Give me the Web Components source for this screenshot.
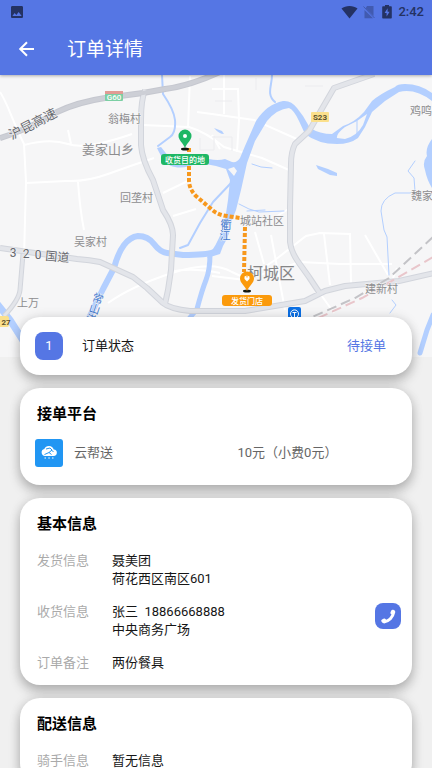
<!DOCTYPE html>
<html lang="zh-CN">
<head>
<meta charset="utf-8">
<meta name="viewport" content="width=device-width, initial-scale=1">
<title>订单详情</title>
<style>
    body {
        margin: 0;
        --primary: #5576e4;
        --page: #f0f0f0;
        font-family: Roboto, "Noto Sans CJK SC", sans-serif;
        font-size: 13px;
        line-height: 18px;
        color: #161616;
        background: var(--page);
    }
</style>
</head>
<body>
<order-page>
    <status-bar slot="header" time="2:42"></status-bar>
    <app-bar slot="header">订单详情</app-bar>
    <route-map></route-map>
    <card-list>
        <order-status step="1" state="待接单">订单状态</order-status>
        <info-card heading="接单平台">
            <delivery-platform price="10元（小费0元）">云帮送</delivery-platform>
        </info-card>
        <info-card heading="基本信息">
            <info-row label="发货信息">聂美团<br>荷花西区南区601</info-row>
            <info-row label="收货信息">张三&nbsp; 18866668888<br>中央商务广场<call-button slot="action" phone="18866668888"></call-button></info-row>
            <info-row label="订单备注">两份餐具</info-row>
        </info-card>
        <info-card heading="配送信息">
            <info-row label="骑手信息">暂无信息</info-row>
        </info-card>
    </card-list>
</order-page>

<script>
class OrderPage extends HTMLElement {
    constructor() {
        super();
        this.attachShadow({ mode: 'open' }).innerHTML = `
            <style>
                :host { display: flex; flex-direction: column; height: 100vh; }
                header {
                    background: var(--primary);
                    box-shadow: 0 1px 3px rgba(0, 0, 0, 0.3);
                    z-index: 1;
                }
                main { flex: 1; min-height: 0; overflow-y: auto; scrollbar-width: none; }
            </style>
            <header><slot name="header"></slot></header>
            <main><slot></slot></main>
        `;
    }
}

class StatusBar extends HTMLElement {
    constructor() {
        super();
        this.attachShadow({ mode: 'open' }).innerHTML = `
            <style>
                :host {
                    display: flex;
                    align-items: center;
                    height: 24px;
                    padding: 0 8px 0 9px;
                    color: #243263;
                    font-size: 13px;
                    font-weight: 500;
                }
                svg { display: block; fill: currentColor; }
                .icons { display: flex; align-items: center; gap: 4px; margin: 0 4px 0 auto; }
            </style>
            <svg width="16" height="16" viewBox="0 0 24 24"><path d="M21 19V5c0-1.100-.9-2-2-2H5c-1.100 0-2 .9-2 2v14c0 1.100.9 2 2 2h14c1.100 0 2-.9 2-2zM8.500 13.500l2.500 3 3.500-4.500 4.500 6H5l3.500-4.500z"/></svg>
            <div class="icons">
                <svg width="17" height="14" viewBox="0 0 17 14"><path d="M8.500 13.500 0.500 3.500C4.500 0 12.500 0 16.500 3.500z"/></svg>
                <svg width="14" height="14" viewBox="0 0 14 14" opacity=".4"><path d="M5 1h6.500v10L3.700 3.200zM2.500 5 11 13.200H2.500z"/><path d="M1.500 1.500 12.500 13" fill="none" stroke="currentColor"/></svg>
                <svg width="14" height="14" viewBox="0 0 14 14"><path fill-rule="evenodd" d="M5 0h4v1.300h2q.8 0 .8.8v10.600q0 .8-.8.8H3q-.8 0-.8-.8V2.100q0-.8.8-.8h2zM7.600 3.200 4.600 8h2v3.500l3-4.700h-2z"/></svg>
            </div>
            <time></time>
        `;
        this.shadowRoot.querySelector('time').textContent = this.getAttribute('time');
    }
}

class AppBar extends HTMLElement {
    constructor() {
        super();
        this.attachShadow({ mode: 'open' }).innerHTML = `
            <style>
                :host { display: flex; align-items: center; gap: 27px; height: 51px; padding: 0 14px; color: #fff; }
                button { display: flex; padding: 0; border: 0; background: none; color: inherit; cursor: pointer; }
                h1 { margin: 0; font-size: 19px; line-height: 28px; font-weight: 400; }
            </style>
            <button type="button" aria-label="返回">
                <svg width="26" height="26" viewBox="0 0 26 26" fill="none" stroke="currentColor" stroke-width="2"><path d="M20 12H6.500M13 5.200 6.200 12l6.800 6.800"/></svg>
            </button>
            <h1><slot></slot></h1>
        `;
    }
}

class RouteMap extends HTMLElement {
    constructor() {
        super();
        this.attachShadow({ mode: 'open' }).innerHTML = `
            <style>
                :host { display: block; background: #f6f6f7; }
                svg { display: block; width: 100%; }
                .water { fill: #b3cfff; }
                .stream { fill: none; stroke: #b3cfff; stroke-linecap: round; stroke-linejoin: round; }
                .lane { fill: none; stroke: #fff; stroke-width: 2; }
                .edge { fill: none; stroke: #d2d5dc; stroke-width: 6; stroke-linejoin: round; }
                .road { fill: none; stroke: #e3e5ea; stroke-width: 4; stroke-linejoin: round; }
                .place { fill: #8d8d8f; font-size: 11px; }
                .major { font-size: 13px; }
                .city { font-size: 16px; fill: #858587; }
                .name { fill: #66686e; font-size: 12px; text-anchor: middle; }
                .highway { font-size: 13px; }
                .river { fill: #3f78cf; font-size: 11px; text-anchor: middle; }
                .tag { fill: #fff; font-size: 8px; font-weight: 500; text-anchor: middle; }
                .shield { fill: #5c532f; font-weight: 700; }
                text { paint-order: stroke; stroke: #f6f6f7; stroke-width: 1px; }
                .tag { stroke: none; }
            </style>
            <svg viewBox="0 75 432 282" role="img" aria-label="配送路线">
                <!-- local streets -->
                <g class="lane">
                    <path d="M0 92C8 104 12 120 24 144L26 182 24 258M24 145Q50 138 68 144T132 134M26 183 66 181Q86 182 108 174T154 158M68 130 71 144M78 182Q80 210 84 230M142 125 189 127Q206 132 224 147L262 158 289 170M190 76 188 128M197 112 212 114 254 120 299 140M212 89 238 89 239 120 237 152M212 135 220 149M224 75V114M163 193 192 179M173 216 196 209M108 303Q132 286 172 273T232 272L245 278M170 272Q190 267 220 273"/>
                    <path d="M212 276 245 280 300 262 340 264 392 264M245 280 275 260 306 236 320 233 350 234 351 283M324 234 330 285M319 292 334 313M255 232 264 264M271 235 285 310M274 218 290 208M365 235 388 275M393 278 397 268"/>
                </g>
                <g fill="none" stroke="#ececef"><path d="M212 137h20v14M200 138v12h14V136M256 78v12M305 86h18M215 101h17"/></g>

                <!-- water -->
                <path class="water" d="M432 93Q420 84 405 84 397 84 395 87 380 94 372 101L364 112Q355 122 343 126L332 134Q320 134 310 128L303 116 297 108Q291 100 283 101 267 104 256 121L245 146 240 158Q237 163 232 162L225 159Q218 161 209 159L197 163Q185 169 175 167 165 166 157 148L161 147 169 157Q172 164 190 161L216 166 226 169 230 180 228 200 225 220Q221 238 211 252L207 258 220 254 223 246Q230 235 232 220L236 210 241 190 247 163 255 141 267 121Q277 109 289 108 294 110 299 121L305 134Q318 144 337 144 350 144 358 138L365 127 372 112 385 101 399 92Q415 88 432 101z"/>
                <path d="M337 138Q336 134 345 127L357 121 367 114 363 125Q357 136 345 139zM228 169l6-2 3 4-3 5z" fill="#f6f6f7"/>
                <path class="stream" stroke-width="1" d="M357 121v14"/>
                <path class="water" d="M432 139Q425 148 427 156 422 162 425 170 427 180 432 188zM316 165l12 4 9 4v3l-7-1-12-6zM214 128l8 3 2 3q-5 0-10-6z"/>
                <path class="stream" stroke-width="6" d="M214 252Q207 255 183 255L167 253Q160 252 154 244T138 236Q130 237 124 245T114 268L103 289 88 320"/>
                <path class="stream" stroke-width="5" d="M210 254Q210 270 206 280T197 309L188 320"/>
                <path class="stream" stroke-width="5" d="M433 315 427 330 420 353"/>
                <path class="stream" stroke-width="7" d="M-2 305 10 320 24 342"/>
                <path class="stream" stroke-width="2" d="M231 183 213 202 200 223 188 245 180 248M162 75 163 94Q174 110 175 120 176 133 170 137L158 146M272 75C272 86 266 94 275 102"/>
                <path class="stream" stroke-width="1" d="M415 161 408 171 414 178 415 191 410 193 395 193Q381 199 381 211L384 230 387 237 389 275M392 300l4 5-6 8M252 164l9 3 11 1M239 204q10 6 20 8l25-1M247 211l18-1"/>

                <!-- highways -->
                <g class="edge">
                    <path stroke-width="5" d="M23 254 20 290Q19 300 4 316"/>
                    <path d="M145 90Q141 100 141 120V145Q142 160 153 180L163 210Q173 225 173 235L171 270 168 290 165 304M0 248 77 259Q90 260 100 262L133 277 147 288 163 303Q170 309 190 311H212L245 311 305 301 325 291 345 286 399 281 434 273M374 74 334 88 309 131 295 144Q291 152 291 164L290 207V242Q291 252 299 263L309 277 319 292"/>
                    <path stroke="#c5c7cf" d="M0 138Q25 131 57 112 78 102 105 98L143 93 165 89Q190 86 222 71"/>
                </g>
                <g class="road">
                    <path stroke-width="3" d="M23 254 20 290Q19 300 4 316"/>
                    <path d="M145 90Q141 100 141 120V145Q142 160 153 180L163 210Q173 225 173 235L171 270 168 290 165 304M0 248 77 259Q90 260 100 262L133 277 147 288 163 303Q170 309 190 311H212L245 311 305 301 325 291 345 286 399 281 434 273M374 74 334 88 309 131 295 144Q291 152 291 164L290 207V242Q291 252 299 263L309 277 319 292"/>
                    <path stroke="#cdcfd6" d="M0 138Q25 131 57 112 78 102 105 98L143 93 165 89Q190 86 222 71"/>
                </g>

                <!-- railways -->
                <g fill="none" stroke-width="2" stroke-dasharray="10 5">
                    <path stroke="#c3c3c7" d="M433 237 389 278 355 298 310 318"/>
                    <path stroke="#e9c6cb" d="M433 257 395 279 362 298 316 319"/>
                </g>

                <!-- road shields -->
                <rect x="105" y="91" width="18" height="10" rx="1" fill="#7ccfa4"/>
                <rect x="105" y="91" width="18" height="3" fill="#e19b94"/>
                <text x="114" y="100" class="tag">G60</text>
                <rect x="311" y="112" width="18" height="10" rx="1" fill="#fbe08c"/>
                <text x="320" y="120" class="tag shield">S23</text>
                <rect x="-9" y="316" width="18" height="11" rx="2" fill="#fbe08c"/>
                <text x="6" y="325" class="tag shield">27</text>

                <!-- place names -->
                <g class="place">
                    <text x="108" y="123">翁梅村</text>
                    <text x="82" y="154" class="major">姜家山乡</text>
                    <text x="120" y="202">回垄村</text>
                    <text x="74" y="246">吴家村</text>
                    <text x="17" y="307">上万</text>
                    <text x="240" y="225">城站社区</text>
                    <text x="247" y="279" class="city">柯城区</text>
                    <text x="365" y="293">建新村</text>
                    <text x="410" y="115">鸡鸣</text>
                    <text x="411" y="200">魏家</text>
                </g>
                <text class="name highway" transform="translate(35 128) rotate(-27)">沪昆高速</text>
                <g class="name">
                    <text x="13" y="257">3</text><text x="26" y="258">2</text><text x="38" y="259">0</text>
                    <text transform="translate(57 261) rotate(5)">国道</text>
                </g>
                <g class="river">
                    <text x="226" y="229">衢</text><text x="225" y="240">江</text>
                    <g transform="translate(95 308) rotate(18)"><text y="-6">常</text><text y="5">山</text><text y="16">港</text></g>
                </g>

                <!-- metro stop -->
                <rect x="288" y="307" width="13" height="13" rx="2" fill="#0b6fe4"/>
                <path d="M292 317a4 4 0 1 1 5 0M292.500 312.500h4M294.500 312.500v5" fill="none" stroke="#fff"/>

                <!-- route -->
                <path d="M189 148V180Q189 189 196 196L210 208Q217 215 227 216L240 218M245 227 244 272" fill="none" stroke="#f7981d" stroke-width="4" stroke-dasharray="4 2"/>
                <ellipse cx="185" cy="149" rx="4" ry="1.500" fill="#101510"/>
                <path d="M185 148C183 143 178.500 140 178.500 136a6.500 6.500 0 0 1 13 0C191.500 140 187 143 185 148z" fill="#1eb765"/>
                <circle cx="185" cy="136" r="2" fill="#fff"/>
                <rect x="161" y="154" width="48" height="11" rx="3" fill="#1eb765"/>
                <text class="tag" x="185" y="163">收货目的地</text>
                <ellipse cx="247" cy="291" rx="4" ry="1.500" fill="#101510"/>
                <path d="M247 291C245 286 240 283 240 278.500a7 7 0 0 1 14 0C254 283 249 286 247 291z" fill="#fb9a0c"/>
                <path d="M244.500 276.500 247 275.500 249.500 276.500V279L247 281.500 244.500 279z" fill="#fff"/>
                <path d="M247 275.500v2" stroke="#fb9a0c"/>
                <rect x="222" y="295" width="50" height="11" rx="3" fill="#fb9a0c"/>
                <text class="tag" x="247" y="304">发货门店</text>
            </svg>
        `;
    }
}

class CardList extends HTMLElement {
    constructor() {
        super();
        // the first card overlaps the bottom of the map
        this.attachShadow({ mode: 'open' }).innerHTML = `
            <style>
                :host {
                    display: flex;
                    flex-direction: column;
                    gap: 13px;
                    margin-top: -40px;
                    padding: 0 20px 20px;
                    position: relative;
                }
                ::slotted(*) {
                    border-radius: 20px;
                    background: #fff;
                    box-shadow: 0 7px 12px rgba(0, 0, 0, 0.22), 0 0 12px rgba(0, 0, 0, 0.12);
                }
            </style>
            <slot></slot>
        `;
    }
}

class OrderStatus extends HTMLElement {
    constructor() {
        super();
        this.attachShadow({ mode: 'open' }).innerHTML = `
            <style>
                :host { display: flex; align-items: center; padding: 15px 26px 15px 15px; }
                .step {
                    width: 28px;
                    margin-right: 19px;
                    border-radius: 8px;
                    background: var(--primary);
                    color: #fff;
                    line-height: 28px;
                    text-align: center;
                }
                .state { margin-left: auto; color: var(--primary); }
            </style>
            <span class="step"></span>
            <slot></slot>
            <span class="state"></span>
        `;
        this.shadowRoot.querySelector('.step').textContent = this.getAttribute('step');
        this.shadowRoot.querySelector('.state').textContent = this.getAttribute('state');
    }
}

class InfoCard extends HTMLElement {
    constructor() {
        super();
        this.attachShadow({ mode: 'open' }).innerHTML = `
            <style>
                :host { display: block; padding: 15px 11px 13px 17px; }
                h2 { margin: 0 0 17px; font-size: 15px; line-height: 22px; font-weight: 700; color: #000; }
                .rows { display: flex; flex-direction: column; gap: 15px; }
            </style>
            <h2></h2>
            <div class="rows"><slot></slot></div>
        `;
        this.shadowRoot.querySelector('h2').textContent = this.getAttribute('heading');
    }
}

class DeliveryPlatform extends HTMLElement {
    constructor() {
        super();
        this.attachShadow({ mode: 'open' }).innerHTML = `
            <style>
                :host {
                    display: grid;
                    grid-template-columns: 39px 1fr 1fr;
                    align-items: center;
                    margin: -3px 0 5px -2px;
                    color: #666;
                }
                svg { display: block; }
            </style>
            <svg width="28" height="28" viewBox="0 0 28 28">
                <rect width="28" height="28" rx="3" fill="#2196f3"/>
                <path d="M10 17a3.500 3.500 0 0 1-.7-6.900 5 5 0 0 1 9.400.3 3.300 3.300 0 0 1-.3 6.600z" fill="#fff"/>
                <path d="M11 10l4-1 2 2-3 2.500 2.500 2M14 13.500l-4.500 2M16.500 11.500l2 1" fill="none" stroke="#2196f3"/>
                <path d="M9.500 19h1.500M13.300 19h1.500M17 19h1.500" stroke="#fff"/>
            </svg>
            <span><slot></slot></span>
            <span class="price"></span>
        `;
        this.shadowRoot.querySelector('.price').textContent = this.getAttribute('price');
    }
}

class InfoRow extends HTMLElement {
    constructor() {
        super();
        this.attachShadow({ mode: 'open' }).innerHTML = `
            <style>
                :host { display: flex; align-items: flex-start; }
                .label { flex: 0 0 75px; color: #aaa; }
                .value { flex: 1; }
            </style>
            <span class="label"></span>
            <span class="value"><slot></slot></span>
            <slot name="action"></slot>
        `;
        this.shadowRoot.querySelector('.label').textContent = this.getAttribute('label');
    }
}

class CallButton extends HTMLElement {
    constructor() {
        super();
        this.attachShadow({ mode: 'open' }).innerHTML = `
            <style>
                :host { display: block; }
                a { display: block; border-radius: 8px; background: var(--primary); color: #fff; }
                svg { display: block; }
            </style>
            <a aria-label="拨打电话">
                <svg width="26" height="26" viewBox="0 0 26 26" fill="currentColor"><path d="M16.300 7.500Q17 6.300 18.300 6.800L19.700 7.600Q20.400 8.200 20.200 9.600 19.500 13.500 16.500 16.800 13.200 20 9.200 20.400 7.800 20.400 7.200 19.600L6.300 18.300Q5.900 17.100 7 16.500L9 15.600Q10 15.300 10.700 16.300L11.200 16.800Q13.300 15.900 14.500 14.600 15.700 13.300 16.500 11.300L15.900 10.900Q15.100 10.200 15.500 9.200z"/></svg>
            </a>
        `;
        this.shadowRoot.querySelector('a').href = 'tel:' + this.getAttribute('phone');
    }
}

customElements.define('order-page', OrderPage);
customElements.define('status-bar', StatusBar);
customElements.define('app-bar', AppBar);
customElements.define('route-map', RouteMap);
customElements.define('card-list', CardList);
customElements.define('order-status', OrderStatus);
customElements.define('info-card', InfoCard);
customElements.define('delivery-platform', DeliveryPlatform);
customElements.define('info-row', InfoRow);
customElements.define('call-button', CallButton);
</script>
</body>
</html>
